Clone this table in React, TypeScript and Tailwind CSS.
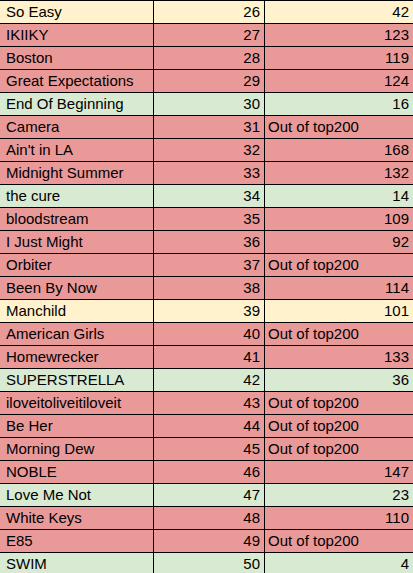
const rows: [string, number, string, "y" | "r" | "g"][] = [
  ["So Easy", 26, "42", "y"],
  ["IKIIKY", 27, "123", "r"],
  ["Boston", 28, "119", "r"],
  ["Great Expectations", 29, "124", "r"],
  ["End Of Beginning", 30, "16", "g"],
  ["Camera", 31, "Out of top200", "r"],
  ["Ain't in LA", 32, "168", "r"],
  ["Midnight Summer", 33, "132", "r"],
  ["the cure", 34, "14", "g"],
  ["bloodstream", 35, "109", "r"],
  ["I Just Might", 36, "92", "r"],
  ["Orbiter", 37, "Out of top200", "r"],
  ["Been By Now", 38, "114", "r"],
  ["Manchild", 39, "101", "y"],
  ["American Girls", 40, "Out of top200", "r"],
  ["Homewrecker", 41, "133", "r"],
  ["SUPERSTRELLA", 42, "36", "g"],
  ["iloveitoliveitiloveit", 43, "Out of top200", "r"],
  ["Be Her", 44, "Out of top200", "r"],
  ["Morning Dew", 45, "Out of top200", "r"],
  ["NOBLE", 46, "147", "r"],
  ["Love Me Not", 47, "23", "g"],
  ["White Keys", 48, "110", "r"],
  ["E85", 49, "Out of top200", "r"],
  ["SWIM", 50, "4", "g"],
]

const bg = {
  y: "bg-[#fff2cc]",
  r: "bg-[#ea9999]",
  g: "bg-[#d9ead3]",
}

export default function App() {
  return (
    <div className="w-[413px] h-[573px] overflow-hidden bg-white font-['Liberation_Sans',Arial,sans-serif] text-[15px] text-black">
      <div className="grid grid-cols-[153px_111px_149px] border-t border-black">
        {rows.map(([title, pos, peak, c], i) => {
          const numeric = !peak.startsWith("Out")
          return (
            <div key={i} className={`contents`}>
              <div className={`${bg[c]} h-[23px] leading-[22px] border-b border-black pl-[6px] whitespace-nowrap overflow-hidden`}>
                {title}
              </div>
              <div className={`${bg[c]} h-[23px] leading-[22px] border-b border-l border-black pr-[4px] text-right`}>
                {pos}
              </div>
              <div
                className={`${bg[c]} h-[23px] leading-[22px] border-b border-l border-black whitespace-nowrap ${
                  numeric ? "pr-[4px] text-right" : "pl-[3px] text-left"
                }`}
              >
                {peak}
              </div>
            </div>
          )
        })}
      </div>
    </div>
  )
}
